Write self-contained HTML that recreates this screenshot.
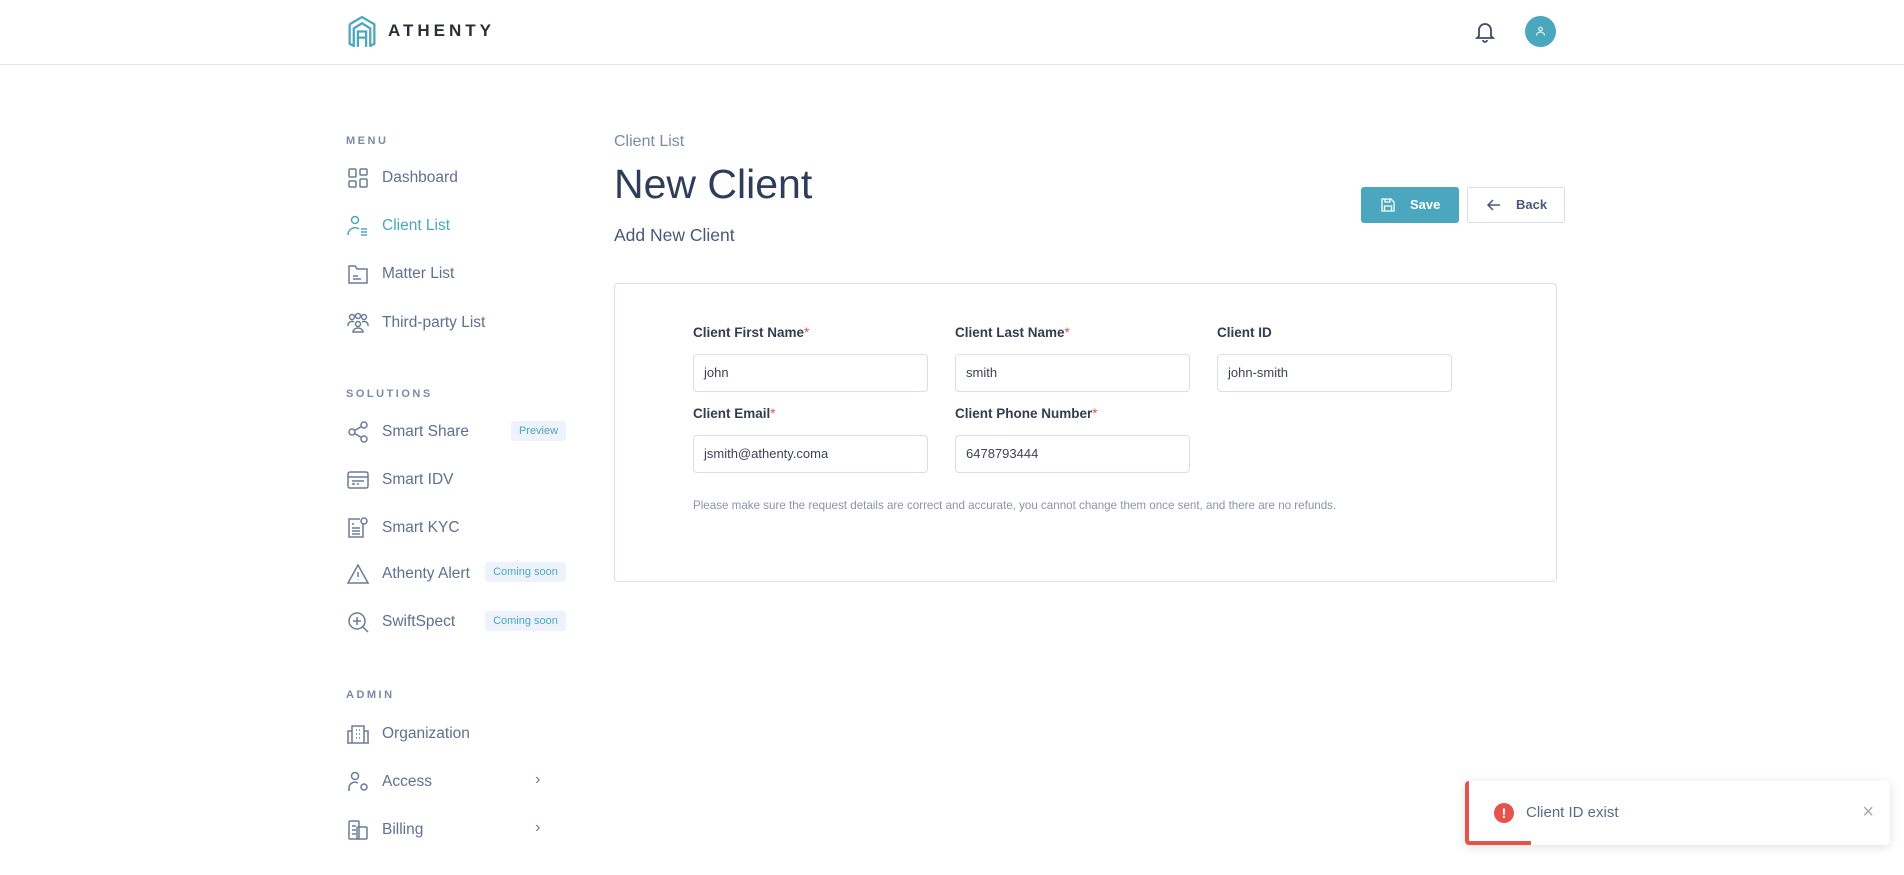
<!DOCTYPE html>
<html><head><meta charset="utf-8"><style>
*{box-sizing:border-box;margin:0;padding:0}
body{width:1904px;height:875px;overflow:hidden;background:#fff;font-family:"Liberation Sans",sans-serif;position:relative;color:#5a6a8a}
.abs{position:absolute}
.hdr{left:0;top:0;width:1904px;height:65px;border-bottom:1px solid #e2e7f0}
.logo{left:388px;top:21px;font-size:17px;font-weight:bold;letter-spacing:4px;color:#2a2e38}
.sec{left:346px;font-size:11px;font-weight:bold;letter-spacing:2.5px;color:#7b8aa5}
.item{left:346px;height:24px;display:flex;align-items:center;font-size:15.5px;color:#5f7090;font-weight:500}
.item svg{width:24px;height:24px;margin-right:12px;fill:none;stroke:#6b7b98;stroke-width:1.5}
.badge{position:absolute;height:20px;line-height:20px;font-size:11px;color:#4aa7bd;background:#eef2fb;border-radius:3px;text-align:center}
.chev{position:absolute;left:535px;font-size:16px;color:#6b7b98}
.lbl{font-size:13.5px;font-weight:bold;color:#333d4d}
.lbl b{color:#e5534b;font-weight:normal}
.inp{width:235px;height:38px;border:1px solid #d8dde9;border-radius:4px;font-size:13px;color:#3c4454;padding-left:10px;line-height:36px}
</style></head><body>
<div class="abs hdr"></div>
<svg class="abs" style="left:347px;top:15px" width="30" height="35" viewBox="0 0 28 34" fill="none" stroke="#4aa7bd" stroke-width="2.2"><path d="M2 9 L14 2 L26 9 L26 28 L22 30"/><path d="M6 30 L2 28 L2 9"/><path d="M6 31 V13 L14 8 L22 13 V31"/><path d="M10 31 V16 H18 V31 M10 22 H18"/></svg>
<div class="abs logo">ATHENTY</div>
<svg class="abs" style="left:1475px;top:21px" width="20" height="22" viewBox="0 0 20 22" fill="none" stroke="#3e4a66" stroke-width="1.8"><path d="M4 15 V9 a6 6 0 0 1 12 0 V15 L18 17 H2 Z"/><path d="M8 19 a2 2 0 0 0 4 0"/></svg>
<div class="abs" style="left:1525px;top:16px;width:31px;height:31px;border-radius:50%;background:#4aa7bd"></div>
<svg class="abs" style="left:1533px;top:24px" width="15" height="15" viewBox="0 0 15 15" fill="none" stroke="#fff" stroke-width="1"><circle cx="7.5" cy="5" r="1.8"/><path d="M3.5 11.5 a4 3.5 0 0 1 8 0"/></svg>

<div class="abs sec" style="top:135px">MENU</div>
<div class="abs item" style="top:166px"><svg viewBox="0 0 24 24"><rect x="3" y="3" width="7" height="8" rx="1"/><rect x="14" y="3" width="7" height="6" rx="1"/><rect x="3" y="15" width="7" height="6" rx="1"/><rect x="14" y="13" width="7" height="8" rx="1"/></svg>Dashboard</div>
<div class="abs item" style="top:214px;color:#4aa7bd"><svg viewBox="0 0 24 24" style="stroke:#4aa7bd"><circle cx="9" cy="6" r="3.5"/><path d="M2 21 a7 7 0 0 1 11 -6 M15 15 h6 M15 18 h6 M15 21 h6"/></svg>Client List</div>
<div class="abs item" style="top:262px"><svg viewBox="0 0 24 24"><path d="M3 4 h6 l2 3 h10 v14 H3 Z M7 14 h5 M7 17 h8"/></svg>Matter List</div>
<div class="abs item" style="top:311px"><svg viewBox="0 0 24 24"><circle cx="6" cy="6" r="2.5"/><circle cx="12" cy="5" r="2.5"/><circle cx="18" cy="6" r="2.5"/><circle cx="12" cy="13" r="2.5"/><path d="M2 15 a4 4 0 0 1 6 -4 M22 15 a4 4 0 0 0 -6 -4 M7 21 a5 4 0 0 1 10 0 Z"/></svg>Third-party List</div>

<div class="abs sec" style="top:388px">SOLUTIONS</div>
<div class="abs item" style="top:420px"><svg viewBox="0 0 24 24"><circle cx="18" cy="5" r="3"/><circle cx="6" cy="12" r="3"/><circle cx="18" cy="19" r="3"/><path d="M8.6 10.5 L15.4 6.5 M8.6 13.5 L15.4 17.5"/></svg>Smart Share</div>
<div class="badge" style="left:511px;top:421px;width:55px">Preview</div>
<div class="abs item" style="top:468px"><svg viewBox="0 0 24 24"><rect x="2" y="4" width="20" height="16" rx="2"/><path d="M2 9 h20 M6 13 h12 M6 16 h3 M11 16 h2"/></svg>Smart IDV</div>
<div class="abs item" style="top:516px"><svg viewBox="0 0 24 24"><path d="M17 8 V21 H3 V3 h11"/><circle cx="18" cy="5" r="3"/><path d="M6 8 h2 M6 12 h8 M6 15 h8 M6 18 h8"/></svg>Smart KYC</div>
<div class="abs item" style="top:562px"><svg viewBox="0 0 24 24"><path d="M12 3 L22 21 H2 Z M12 10 v5 M12 17.5 v.5"/></svg>Athenty Alert</div>
<div class="badge" style="left:485px;top:562px;width:81px">Coming soon</div>
<div class="abs item" style="top:610px"><svg viewBox="0 0 24 24"><circle cx="11" cy="11" r="8"/><path d="M17 17 L22 22 M11 7 v8 M7 11 h8"/></svg>SwiftSpect</div>
<div class="badge" style="left:485px;top:611px;width:81px">Coming soon</div>

<div class="abs sec" style="top:689px">ADMIN</div>
<div class="abs item" style="top:722px"><svg viewBox="0 0 24 24"><path d="M6 21 V4 h12 v17 M2 21 V9 h4 M18 9 h4 v12 M1 21 h22 M10 8 h1 M13 8 h1 M10 12 h1 M13 12 h1 M10 16 h1 M13 16 h1"/></svg>Organization</div>
<div class="abs item" style="top:770px"><svg viewBox="0 0 24 24"><circle cx="9" cy="6" r="3.5"/><path d="M3 21 v-3 a6 6 0 0 1 9 -5"/><circle cx="18" cy="17" r="3"/></svg>Access</div>
<div class="chev" style="top:771px">›</div>
<div class="abs item" style="top:818px"><svg viewBox="0 0 24 24"><rect x="3" y="3" width="10" height="18" rx="1"/><rect x="11" y="9" width="10" height="12" rx="1"/><path d="M6 8 h4 M6 12 h4 M6 16 h4"/></svg>Billing</div>
<div class="chev" style="top:819px">›</div>

<div class="abs" style="left:614px;top:133px;font-size:16px;color:#7b8aa5">Client List</div>
<div class="abs" style="left:614px;top:161px;font-size:41px;color:#2e3d59">New Client</div>
<div class="abs" style="left:614px;top:225px;font-size:17.5px;color:#4a5878">Add New Client</div>

<div class="abs" style="left:1361px;top:187px;width:98px;height:36px;background:#4aa7bd;border-radius:3px;color:#fff;font-size:13px;font-weight:bold;line-height:36px;padding-left:49px">Save</div>
<svg class="abs" style="left:1380px;top:197px" width="16" height="16" viewBox="0 0 16 16" fill="none" stroke="#fff" stroke-width="1.3"><path d="M2 2 h9 l3 3 v9 H2 Z M5 2 v3 h5 v-3 M4.5 14 v-5 h7 v5"/></svg>
<div class="abs" style="left:1467px;top:187px;width:98px;height:36px;border:1px solid #d8dde9;border-radius:3px;color:#4a5878;font-size:13px;font-weight:bold;line-height:34px;padding-left:48px">Back</div>
<svg class="abs" style="left:1486px;top:197px" width="16" height="16" viewBox="0 0 16 16" fill="none" stroke="#4a5878" stroke-width="1.5"><path d="M14 8 H2 M7 3 L2 8 L7 13"/></svg>

<div class="abs" style="left:614px;top:283px;width:943px;height:299px;border:1px solid #d8dde9;border-radius:4px"></div>
<div class="abs lbl" style="left:693px;top:325px">Client First Name<b>*</b></div>
<div class="abs lbl" style="left:955px;top:325px">Client Last Name<b>*</b></div>
<div class="abs lbl" style="left:1217px;top:325px">Client ID</div>
<div class="abs inp" style="left:693px;top:354px">john</div>
<div class="abs inp" style="left:955px;top:354px">smith</div>
<div class="abs inp" style="left:1217px;top:354px">john-smith</div>
<div class="abs lbl" style="left:693px;top:406px">Client Email<b>*</b></div>
<div class="abs lbl" style="left:955px;top:406px">Client Phone Number<b>*</b></div>
<div class="abs inp" style="left:693px;top:435px">jsmith@athenty.coma</div>
<div class="abs inp" style="left:955px;top:435px">6478793444</div>
<div class="abs" style="left:693px;top:499px;font-size:11.6px;color:#8a94a8">Please make sure the request details are correct and accurate, you cannot change them once sent, and there are no refunds.</div>

<div class="abs" style="left:1465px;top:781px;width:425px;height:64px;background:#fff;border-radius:4px;box-shadow:0 2px 10px rgba(0,0,0,.12);border-left:4px solid #e5534b;overflow:hidden">
<div style="position:absolute;left:0;bottom:0;width:62px;height:4px;background:#e5534b"></div>
<div style="position:absolute;left:25px;top:22px;width:20px;height:20px;border-radius:50%;background:#e5534b;color:#fff;font-weight:bold;font-size:14px;text-align:center;line-height:20px">!</div>
<div style="position:absolute;left:57px;top:23px;font-size:15px;color:#5a6a8a">Client ID exist</div>
<div style="position:absolute;right:16px;top:20px;font-size:20px;color:#aaa">×</div>
</div>
</body></html>
